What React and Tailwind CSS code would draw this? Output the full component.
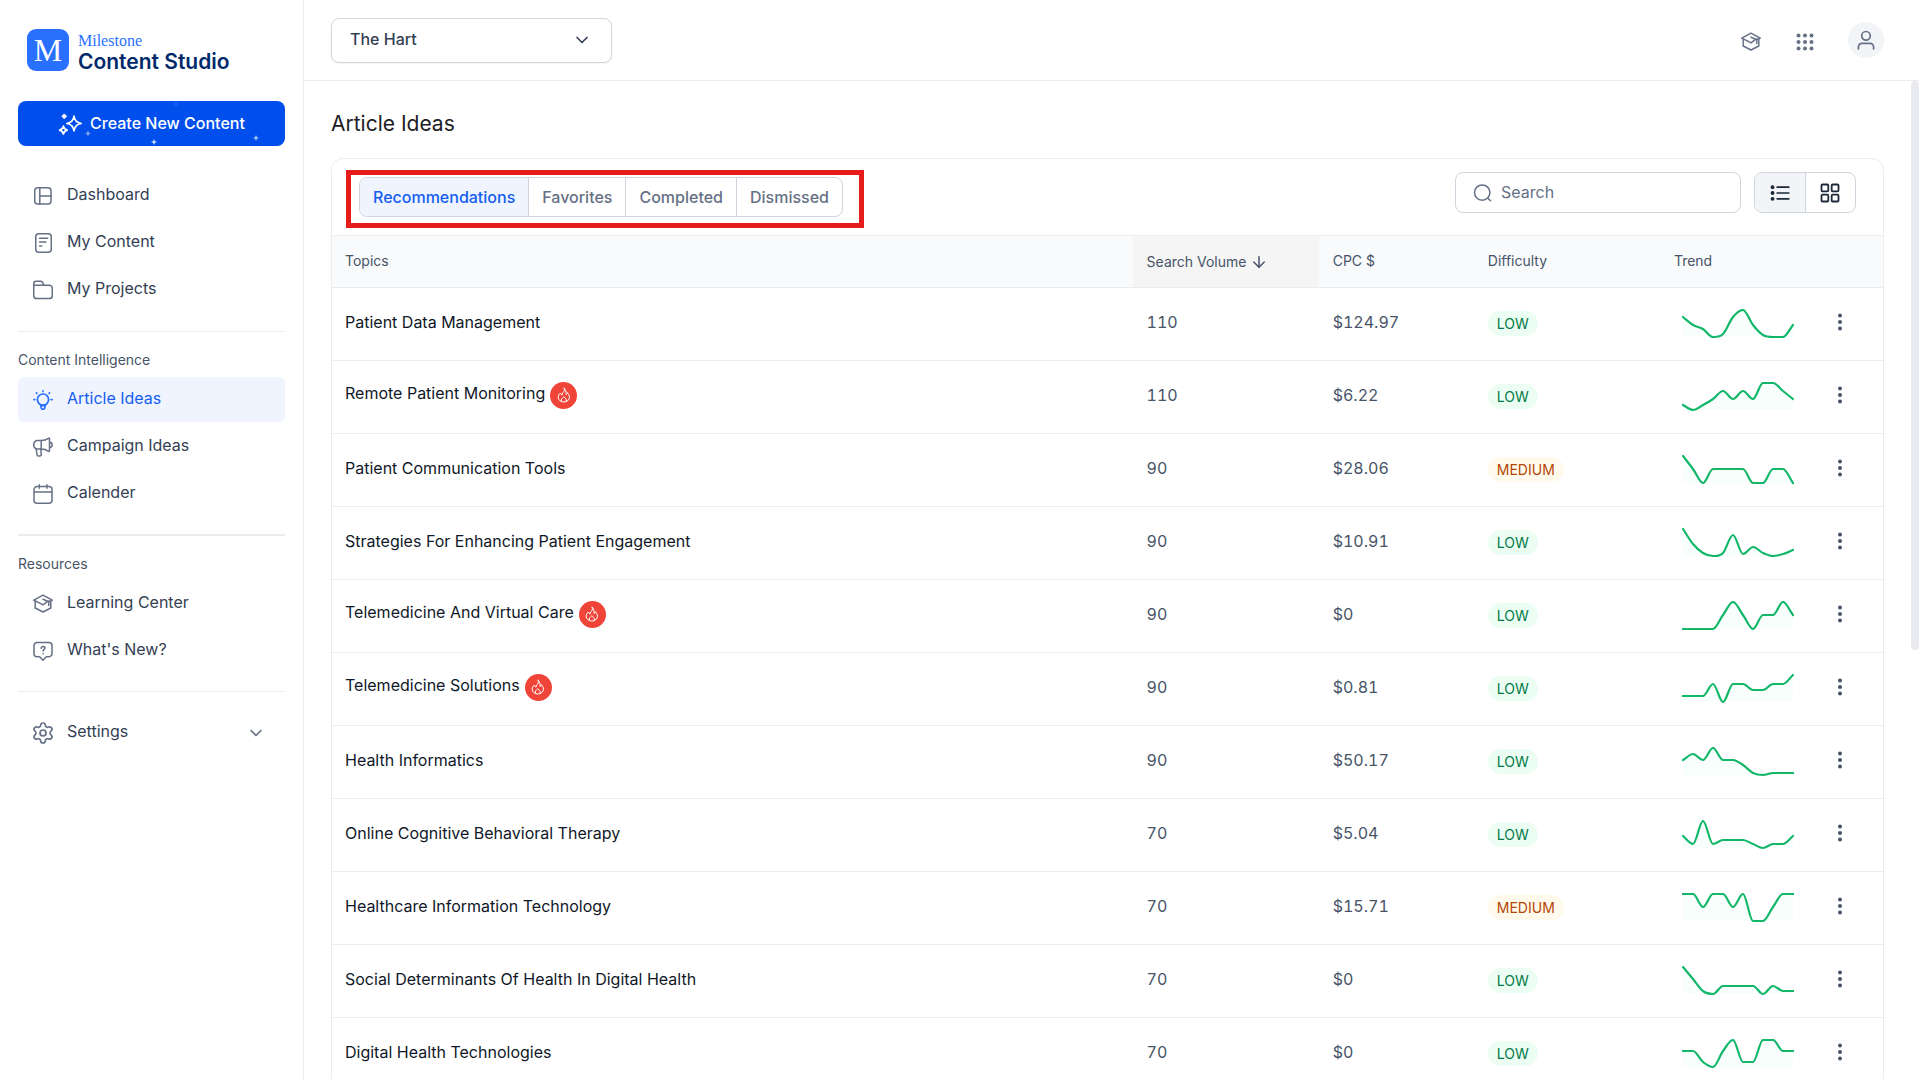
import React, { useState } from 'react';
import { FiChevronDown, FiArrowDown } from 'react-icons/fi';
import { Settings } from 'lucide-react';

const topics = [
    { name: 'Patient Data Management', volume: 110, cpc: '$124.97', difficulty: 'LOW', trend: [20, 12, 8, 0, 3, 20, 27, 12, 2, 0, 0, 12] },
    { name: 'Remote Patient Monitoring', hot: true, volume: 110, cpc: '$6.22', difficulty: 'LOW', trend: [5, 0, 5, 11, 19, 11, 19, 11, 27, 27, 19, 11] },
    { name: 'Patient Communication Tools', volume: 90, cpc: '$28.06', difficulty: 'MEDIUM', trend: [27, 14, 0, 14, 14, 14, 14, 0, 0, 14, 14, 0] },
    { name: 'Strategies For Enhancing Patient Engagement', volume: 90, cpc: '$10.91', difficulty: 'LOW', trend: [27, 12, 3, 0, 3, 21, 2, 9, 3, 0, 2, 6] },
    { name: 'Telemedicine And Virtual Care', hot: true, volume: 90, cpc: '$0', difficulty: 'LOW', trend: [0, 0, 0, 0, 14, 27, 14, 0, 14, 14, 27, 14] },
    { name: 'Telemedicine Solutions', hot: true, volume: 90, cpc: '$0.81', difficulty: 'LOW', trend: [6, 6, 6, 18, 0, 18, 18, 12, 12, 18, 18, 27] },
    { name: 'Health Informatics', volume: 90, cpc: '$50.17', difficulty: 'LOW', trend: [15, 21, 15, 27, 15, 15, 10, 2, 0, 2, 2, 2] },
    { name: 'Online Cognitive Behavioral Therapy', volume: 70, cpc: '$5.04', difficulty: 'LOW', trend: [12, 4, 27, 4, 8, 8, 8, 4, 0, 4, 4, 12] },
    { name: 'Healthcare Information Technology', volume: 70, cpc: '$15.71', difficulty: 'MEDIUM', trend: [27, 27, 14, 27, 27, 14, 27, 0, 0, 14, 27, 27] },
    { name: 'Social Determinants Of Health In Digital Health', volume: 70, cpc: '$0', difficulty: 'LOW', trend: [27, 15, 3, 0, 8, 8, 8, 8, 0, 8, 3, 3] },
    { name: 'Digital Health Technologies', volume: 70, cpc: '$0', difficulty: 'LOW', trend: [16, 16, 5, 0, 16, 27, 5, 5, 27, 27, 16, 16] },
];

const tabs = ['Recommendations', 'Favorites', 'Completed', 'Dismissed'];

const Icon = ({ children, className = 'size-5', box = 20, width = 1.5 }) => (
    <svg viewBox={`0 0 ${box} ${box}`} className={`shrink-0 ${className}`} fill="none" stroke="currentColor" strokeWidth={width} strokeLinecap="round" strokeLinejoin="round" aria-hidden="true">
        {children}
    </svg>
);

const DashboardIcon = () => (
    <Icon>
        <rect x="1.75" y="1.75" width="16.25" height="16.25" rx="3" />
        <path d="M6.8 1.75V18M6.8 9.9H18" />
    </Icon>
);

const ContentIcon = () => (
    <Icon>
        <rect x="2.75" y=".75" width="15.5" height="18.5" rx="3" />
        <path d="M6.6 5.2h8M6.6 9h6.4M6.6 12.9h2.2" />
    </Icon>
);

const FolderIcon = () => (
    <Icon>
        <path d="M.75 5.2h15.6a2.9 2.9 0 0 1 2.9 2.9v7.6a2.9 2.9 0 0 1-2.9 2.9H3.65a2.9 2.9 0 0 1-2.9-2.9V3.6A2.4 2.4 0 0 1 3.15 1.2H7.6c.8 0 1.4.3 1.8 1l1.5 3" />
    </Icon>
);

const BulbIcon = () => (
    <Icon width={1.7}>
        <circle cx="10" cy="9.6" r="5.6" />
        <path d="M7.6 14.8l.7 3.4c.1.6.4.9 1 .9h1.4c.6 0 .9-.3 1-.9l.7-3.4M10 .9v.6M.9 9.6h1M18.1 9.6h1M3.4 2.8l.5.5M16.6 2.8l-.5.5M8.2 15.6h3.6" />
    </Icon>
);

const MegaphoneIcon = () => (
    <Icon>
        <path d="M8.2 3.6H4.4A3.6 3.6 0 0 0 .8 7.4v.8A3.6 3.6 0 0 0 4.4 12h3.8zM8.2 3.6c3 0 5.6-1 7.3-2.3.5-.4 1-.1 1 .5v12c0 .6-.5.9-1 .5C13.8 13 11.2 12 8.2 12zM16.5 5.2c1.6 0 2.7 1.1 2.7 2.6s-1.1 2.6-2.7 2.6M3.2 12l.8 5.6c.1.9.7 1.4 1.5 1.4h1.2c1 0 1.7-.8 1.5-1.8L7.9 12" />
    </Icon>
);

const CalendarIcon = () => (
    <Icon>
        <path d="M4 2.6h12a3 3 0 0 1 3 3v10.6a3 3 0 0 1-3 3H4a3 3 0 0 1-3-3V5.6a3 3 0 0 1 3-3zM1 8h18M6.3.8v3.4M14 .8v3.4" />
    </Icon>
);

const CapIcon = () => (
    <Icon>
        <path d="M.8 6.2 10 1.2l9.2 5-1.6 1c-1.6-.4-2.6-.5-4 1L10 10.9 6.8 9.1zM2.2 7.2V14L10 18l7.8-4V7.2M10 5.2l5.8 2.6v3.7" />
    </Icon>
);

const QuestionIcon = () => (
    <Icon>
        <path d="M4 1.5h12a3 3 0 0 1 3 3v8.2a3 3 0 0 1-3 3h-2.6L10 19.2l-3.4-3.5H4a3 3 0 0 1-3-3V4.5a3 3 0 0 1 3-3z" />
        <path d="M8.2 7.2c0-1.1.8-1.8 1.9-1.8s1.9.7 1.9 1.7c0 1.3-1.9 1.4-1.9 2.8M10.1 12.6v.1" />
    </Icon>
);

const GearIcon = () => <Settings className="-m-0.5 size-6 shrink-0" strokeWidth={1.7} aria-hidden="true" />;

const SearchIcon = () => (
    <Icon>
        <circle cx="9.2" cy="9.6" r="7.7" />
        <path d="M14.8 15.2l2.7 2.5" />
    </Icon>
);

const Kebab = () => (
    <svg viewBox="0 0 4 18" className="h-[18px] w-1" fill="currentColor" aria-hidden="true">
        <circle cx="2" cy="2.5" r="2" />
        <circle cx="2" cy="9" r="2" />
        <circle cx="2" cy="15.5" r="2" />
    </svg>
);

const Flame = () => (
    <span className="ml-[5px] inline-flex size-[27px] items-center justify-center rounded-full bg-[#f04438] align-middle text-white">
        <svg viewBox="0 0 14 16" className="h-4 w-3.5" fill="none" stroke="currentColor" strokeLinejoin="round" strokeLinecap="round" aria-hidden="true">
            <path d="M7.2 1.2c.5 2.3 0 3.2-1 4.3C5.6 6.2 5 7 5 8.2 4.2 7.6 3.6 6.9 3.4 6 2 7.3 1.2 8.6 1.2 10.2c0 2.8 2.4 4.8 5.6 4.8s5.6-2 5.6-4.8c0-1.9-.9-3.2-2-4.6-.1.9-.5 1.5-1.2 2C9.2 4.8 8.7 2.5 7.2 1.2z" />
            <path d="M4.3 14c-.5-1.9.9-2.9 2.5-4.3 1.6 1.4 3 2.4 2.5 4.3" />
        </svg>
    </span>
);

// Smooth curve through evenly spaced points, flat at every peak and dip
const STEP = 10;
const linePath = (values) => {
    const ys = values.map((v) => 28 - v);
    const slopes = ys.slice(1).map((y, i) => (y - ys[i]) / STEP);
    const tangents = ys.map((_, i) => {
        if (i === 0) return slopes[0];
        if (i === ys.length - 1) return slopes[slopes.length - 1];
        const a = slopes[i - 1];
        const b = slopes[i];
        return a * b <= 0 ? 0 : (a + b) / 2;
    });
    let d = `M1 ${ys[0]}`;
    for (let i = 1; i < ys.length; i++) {
        const x0 = 1 + (i - 1) * STEP;
        const x1 = 1 + i * STEP;
        const h = STEP / 3;
        d += `C${x0 + h} ${ys[i - 1] + tangents[i - 1] * h} ${x1 - h} ${ys[i] - tangents[i] * h} ${x1} ${ys[i]}`;
    }
    return d;
};

const Sparkline = ({ values }) => {
    const d = linePath(values);
    return (
        <svg viewBox="0 0 112 30" className="ml-2 h-[30px] w-28" fill="none" role="img" aria-label="Search trend">
            <path d={`${d}V28H1Z`} fill="#f8fefb" />
            <path d={d} stroke="#12b76a" strokeWidth="2.2" strokeLinecap="square" />
        </svg>
    );
};

const NavItem = ({ icon, label, active, chevron }) => (
    <a
        href="#"
        className={`flex h-[45px] items-center gap-3.5 rounded-md px-[15px] text-base ${active ? 'bg-[#eff4ff] text-[#155eef]' : 'text-[#344054]'}`}
    >
        <span className={active ? 'text-[#2970ff]' : 'text-[#667085]'}>{icon}</span>
        <span className="flex-1 pb-[3px]">{label}</span>
        {chevron && <FiChevronDown className="mr-1 size-5 text-[#667085]" />}
    </a>
);

const NavLabel = ({ children }) => <h2 className="mb-[7px] text-sm text-[#475467]">{children}</h2>;

const Sidebar = () => (
    <aside className="flex w-[304px] shrink-0 flex-col border-r border-[#eaecf0] px-[18px]">
        <div className="mt-[29px] flex h-[42px] items-center gap-[9px] px-[9px]">
            <div className="flex size-[42px] shrink-0 items-center justify-center rounded-[9px] bg-[#2970ff] font-['Liberation_Serif',serif] text-[32px] leading-none text-white">M</div>
            <div className="pt-1.5">
                <div className="font-['Liberation_Serif',serif] text-base leading-[18px] text-[#2970ff]">Milestone</div>
                <div className="text-[21px] leading-6 font-semibold text-[#00296b]">Content Studio</div>
            </div>
        </div>

        <button type="button" className="relative mt-[30px] flex h-[45px] items-center justify-center gap-2 rounded-lg bg-[#004eeb] font-medium text-white">
            <Icon className="size-6" box={24} width={1.7}>
                <path d="M16 4.2c.9 4.6 2.5 6.3 7.2 7.3-4.7 1-6.3 2.7-7.2 7.3-.9-4.6-2.5-6.3-7.2-7.3 4.7-1 6.3-2.7 7.2-7.3z" />
                <path d="M5.4 14.2c.5 2.4 1.4 3.3 3.8 3.9-2.4.6-3.3 1.5-3.8 3.9-.5-2.4-1.4-3.3-3.8-3.9 2.4-.6 3.3-1.5 3.8-3.9z" />
                <path d="M6.2 2.6 7 3.6l1 .7-1 .7-.8 1-.8-1-1-.7 1-.7z" fill="currentColor" />
            </Icon>
            <span className="pb-0.5">Create New Content</span>
            <svg viewBox="0 0 267 45" className="absolute inset-0 size-full" fill="#fff" aria-hidden="true">
                <path opacity=".5" d="M70 29.5l1 2.2 2.2.8-2.2.8-1 2.2-1-2.2-2.2-.8 2.2-.8z" />
                <path opacity=".8" d="M136 38l1 2.2 2.2.8-2.2.8-1 2.2-1-2.2-2.2-.8 2.2-.8z" />
                <path opacity=".65" d="M238 34l1 2.2 2.2.8-2.2.8-1 2.2-1-2.2-2.2-.8 2.2-.8z" />
                <path opacity=".1" d="M158 0l1 2.2 2.2.8-2.2.8-1 2.2-1-2.2-2.2-.8 2.2-.8z" />
            </svg>
        </button>

        <nav className="mt-[27px] flex flex-col">
            <div className="flex flex-col gap-0.5">
                <NavItem icon={<DashboardIcon />} label="Dashboard" />
                <NavItem icon={<ContentIcon />} label="My Content" />
                <NavItem icon={<FolderIcon />} label="My Projects" />
            </div>
            <hr className="mt-[19px] mb-[18px] border-[#eaecf0]" />
            <NavLabel>Content Intelligence</NavLabel>
            <div className="flex flex-col gap-0.5">
                <NavItem icon={<BulbIcon />} label="Article Ideas" active />
                <NavItem icon={<MegaphoneIcon />} label="Campaign Ideas" />
                <NavItem icon={<CalendarIcon />} label="Calender" />
            </div>
            <hr className="my-[18px] border-t-2 border-[#eaecf0]" />
            <NavLabel>Resources</NavLabel>
            <div className="flex flex-col gap-0.5">
                <NavItem icon={<CapIcon />} label="Learning Center" />
                <NavItem icon={<QuestionIcon />} label="What's New?" />
            </div>
            <hr className="my-[18px] border-[#eaecf0]" />
            <NavItem icon={<GearIcon />} label="Settings" chevron />
        </nav>
    </aside>
);

const Header = () => (
    <header className="flex h-[81px] shrink-0 items-center justify-between border-b border-[#eaecf0] px-[27px]">
        <div className="relative">
            <select aria-label="Location" className="h-[45px] w-[281px] appearance-none rounded-lg border border-[#d0d5dd] bg-white px-[18px] pb-0.5 font-medium text-[#344054] shadow-xs">
                <option>The Hart</option>
            </select>
            <FiChevronDown className="pointer-events-none absolute top-3 right-5 size-5 text-[#344054]" />
        </div>
        <div className="mr-2 flex items-center text-[#667085]">
            <button type="button" aria-label="Learning center" className="mr-[35px] pt-1"><CapIcon /></button>
            <button type="button" aria-label="Apps" className="mr-[34px] pt-1">
                <svg viewBox="0 0 18 18" className="size-[18px]" fill="currentColor" aria-hidden="true">
                    {[2.5, 9, 15.5].map((y) => [2.5, 9, 15.5].map((x) => <circle key={`${x}-${y}`} cx={x} cy={y} r="2" />))}
                </svg>
            </button>
            <button type="button" aria-label="Account" className="flex size-9 items-center justify-center rounded-full bg-[#f2f4f7]">
                <Icon className="size-5" width={1.7}>
                    <circle cx="10" cy="5.8" r="4.3" />
                    <path d="M2.4 19v-2a3.7 3.7 0 0 1 3.7-3.7h7.8a3.7 3.7 0 0 1 3.7 3.7v2" />
                </Icon>
            </button>
        </div>
    </header>
);

const App = () => {
    const [activeTab, setActiveTab] = useState('Recommendations');
    const [view, setView] = useState('list');
    const [search, setSearch] = useState('');

    const rows = topics.filter((t) => t.name.toLowerCase().includes(search.toLowerCase()));

    return (
        <div className="flex h-screen overflow-hidden bg-white font-['Inter',sans-serif] text-base">
            <Sidebar />
            <div className="flex min-w-0 flex-1 flex-col">
                <Header />
                <div className="flex min-h-0 flex-1">
                    <main className="min-w-0 flex-1 overflow-hidden px-[27px] pt-7">
                        <h1 className="text-[21px] leading-[30px] text-[#1d2125]">Article Ideas</h1>

                        <section className="mt-[19px] rounded-xl border border-[#eaecf0]">
                            <div className="flex items-start justify-between border-b border-[#eaecf0] pr-[27px] pb-[7px] pl-3.5">
                                <div className="mt-[11px] border-5 border-[#e81b1b] pt-0.5 pr-4 pb-1.5 pl-2">
                                    <div role="tablist" className="flex h-10 divide-x divide-[#d0d5dd] overflow-hidden rounded-lg border border-[#d0d5dd]">
                                        {tabs.map((tab) => (
                                            <button
                                                key={tab}
                                                type="button"
                                                role="tab"
                                                aria-selected={activeTab === tab}
                                                onClick={() => setActiveTab(tab)}
                                                className={`px-[13px] font-medium ${activeTab === tab ? 'bg-[#eff4ff] text-[#155eef]' : 'text-[#667085]'}`}
                                            >
                                                {tab}
                                            </button>
                                        ))}
                                    </div>
                                </div>
                                <div className="mt-[13px] flex gap-[13px]">
                                    <label className="flex h-[41px] w-[286px] items-center gap-2 rounded-lg border border-[#d0d5dd] px-[17px] text-[#667085]">
                                        <SearchIcon />
                                        <input
                                            type="text"
                                            aria-label="Search"
                                            placeholder="Search"
                                            value={search}
                                            onChange={(e) => setSearch(e.target.value)}
                                            className="w-full pb-0.5 outline-none placeholder:text-[#667085]"
                                        />
                                    </label>
                                    <div className="flex h-[41px] w-[102px] divide-x divide-[#d0d5dd] overflow-hidden rounded-lg border border-[#d0d5dd] text-[#1d2939]">
                                        <button type="button" aria-label="List view" onClick={() => setView('list')} className={`flex flex-1 items-center justify-center ${view === 'list' ? 'bg-[#f2f4f7]' : ''}`}>
                                            <Icon className="size-5" width={1.7}>
                                                <path d="M7.2 4.2h11.6M7.2 10h11.6M7.2 15.8h11.6" />
                                                <path d="M2.5 4.2h.1M2.5 10h.1M2.5 15.8h.1" strokeWidth="3.8" />
                                            </Icon>
                                        </button>
                                        <button type="button" aria-label="Grid view" onClick={() => setView('grid')} className={`flex flex-1 items-center justify-center ${view === 'grid' ? 'bg-[#f2f4f7]' : ''}`}>
                                            <Icon className="size-5" width={1.8}>
                                                <rect x="1.5" y="1.5" width="6.8" height="6.8" rx="1" />
                                                <rect x="11.7" y="1.5" width="6.8" height="6.8" rx="1" />
                                                <rect x="1.5" y="11.7" width="6.8" height="6.8" rx="1" />
                                                <rect x="11.7" y="11.7" width="6.8" height="6.8" rx="1" />
                                            </Icon>
                                        </button>
                                    </div>
                                </div>
                            </div>

                            <table className="w-full table-fixed text-left">
                                <thead>
                                    <tr className="h-[51px] border-b border-[#eaecf0] bg-[#f9fafc] text-sm text-[#475467]">
                                        <th className="px-[13px] font-normal">Topics</th>
                                        <th className="w-[12%] bg-[#f5f5f5] px-3.5 font-normal">
                                            <button type="button" className="flex items-center gap-1 pt-0.5">
                                                Search Volume
                                                <FiArrowDown className="size-[18px]" />
                                            </button>
                                        </th>
                                        <th className="w-[10%] px-3.5 font-normal">CPC $</th>
                                        <th className="w-[12%] px-3.5 font-normal">Difficulty</th>
                                        <th className="w-[10%] px-3.5 font-normal">Trend</th>
                                        <th className="w-[68px]" aria-label="Actions" />
                                    </tr>
                                </thead>
                                <tbody>
                                    {rows.map((topic) => (
                                        <tr key={topic.name} className="h-[73px] border-b border-[#eaecf0] text-[#475467]">
                                            <td className="px-[13px] pb-[3px] text-[#101828]">
                                                {topic.name}
                                                {topic.hot && <Flame />}
                                            </td>
                                            <td className="px-3.5 pb-[3px] tabular-nums">{topic.volume}</td>
                                            <td className="px-3.5 pb-[3px] tabular-nums">{topic.cpc}</td>
                                            <td className="px-3.5">
                                                <span className={`inline-flex h-[25px] items-center rounded-full px-[9px] text-sm ${topic.difficulty === 'LOW' ? 'bg-[#ecfdf3] text-[#027a48]' : 'bg-[#fffaeb] text-[#b54708]'}`}>
                                                    {topic.difficulty}
                                                </span>
                                            </td>
                                            <td className="px-3.5">
                                                <Sparkline values={topic.trend} />
                                            </td>
                                            <td className="px-[23px] pb-[3px]">
                                                <button type="button" aria-label="More actions" className="flex"><Kebab /></button>
                                            </td>
                                        </tr>
                                    ))}
                                </tbody>
                            </table>
                        </section>
                    </main>
                    <div className="w-2 shrink-0">
                        <div className="h-[57%] rounded-full bg-[#e9eaef]" />
                    </div>
                </div>
            </div>
        </div>
    );
};

export default App;
